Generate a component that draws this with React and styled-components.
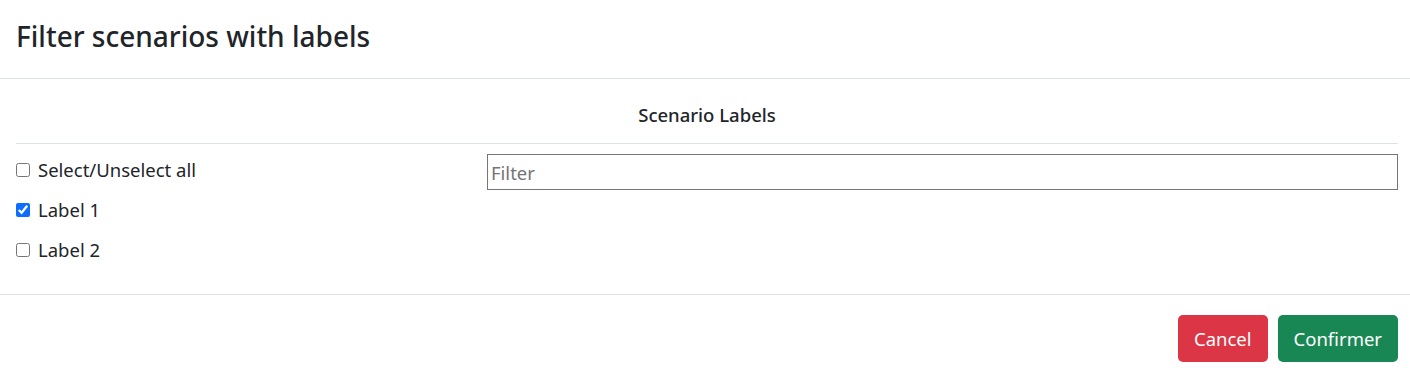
import React from 'react';
import styled, { createGlobalStyle } from 'styled-components';

const GlobalStyle = createGlobalStyle`
  body {
    margin: 0;
    background: #fff;
    font-family: "Noto Sans", "Open Sans", sans-serif;
    color: #212529;
  }
`;

const labels = [
  { name: 'Label 1', checked: true },
  { name: 'Label 2', checked: false },
];

const App = () => {
  return (
    <Modal>
      <GlobalStyle />
      <Header>
        <Title>Filter scenarios with labels</Title>
      </Header>

      <Body>
        <SectionHead>Scenario Labels</SectionHead>
        <Columns>
          <LabelList>
            <CheckRow>
              <input type="checkbox" />
              Select/Unselect all
            </CheckRow>
            {labels.map((l) => (
              <CheckRow key={l.name}>
                <input type="checkbox" defaultChecked={l.checked} />
                {l.name}
              </CheckRow>
            ))}
          </LabelList>
          <FilterInput placeholder="Filter" />
        </Columns>
      </Body>

      <Footer>
        <Button $variant="danger">Cancel</Button>
        <Button $variant="success">Confirmer</Button>
      </Footer>
    </Modal>
  );
};

export default App;

const Modal = styled.div`
  width: 1410px;
  display: flex;
  flex-direction: column;
`;

const Header = styled.div`
  height: 79px;
  padding: 0 16px;
  display: flex;
  align-items: center;
  border-bottom: 1px solid #dee2e6;
  box-sizing: border-box;
`;

const Title = styled.h4`
  margin: 0;
  font-size: 28px;
  font-weight: 500;
  line-height: 1.2;
  padding-bottom: 4px;
`;

const Body = styled.div`
  padding: 0 12px 0 16px;
  height: 215px;
  box-sizing: border-box;
`;

const SectionHead = styled.div`
  height: 65px;
  display: flex;
  align-items: center;
  justify-content: center;
  font-size: 18.5px;
  font-weight: 500;
  border-bottom: 1px solid #dee2e6;
  padding-top: 6px;
  box-sizing: border-box;
`;

const Columns = styled.div`
  display: grid;
  grid-template-columns: 471px 1fr;
  padding-top: 10px;
`;

const LabelList = styled.div`
  display: flex;
  flex-direction: column;
  gap: 15px;
  padding-top: 3px;
`;

const CheckRow = styled.label`
  display: flex;
  align-items: center;
  gap: 8px;
  font-size: 18.5px;
  line-height: 25px;

  input {
    margin: 0;
    width: 14px;
    height: 14px;
    accent-color: #0d6efd;
  }
`;

const FilterInput = styled.input`
  height: 36px;
  box-sizing: border-box;
  border: 1px solid #767676;
  border-radius: 0;
  padding: 0 3px;
  font-family: inherit;
  font-size: 18.5px;
  color: #212529;

  &::placeholder {
    color: #757575;
  }
`;

const Footer = styled.div`
  border-top: 1px solid #dee2e6;
  display: flex;
  justify-content: flex-end;
  gap: 10px;
  padding: 20px 12px 0 16px;
`;

const Button = styled.button`
  height: 47px;
  padding: 0 16px;
  border: none;
  border-radius: 5px;
  font-family: inherit;
  font-size: 18.5px;
  color: #fff;
  background: ${(p) => (p.$variant === 'danger' ? '#dc3545' : '#198754')};
  cursor: pointer;
`;
